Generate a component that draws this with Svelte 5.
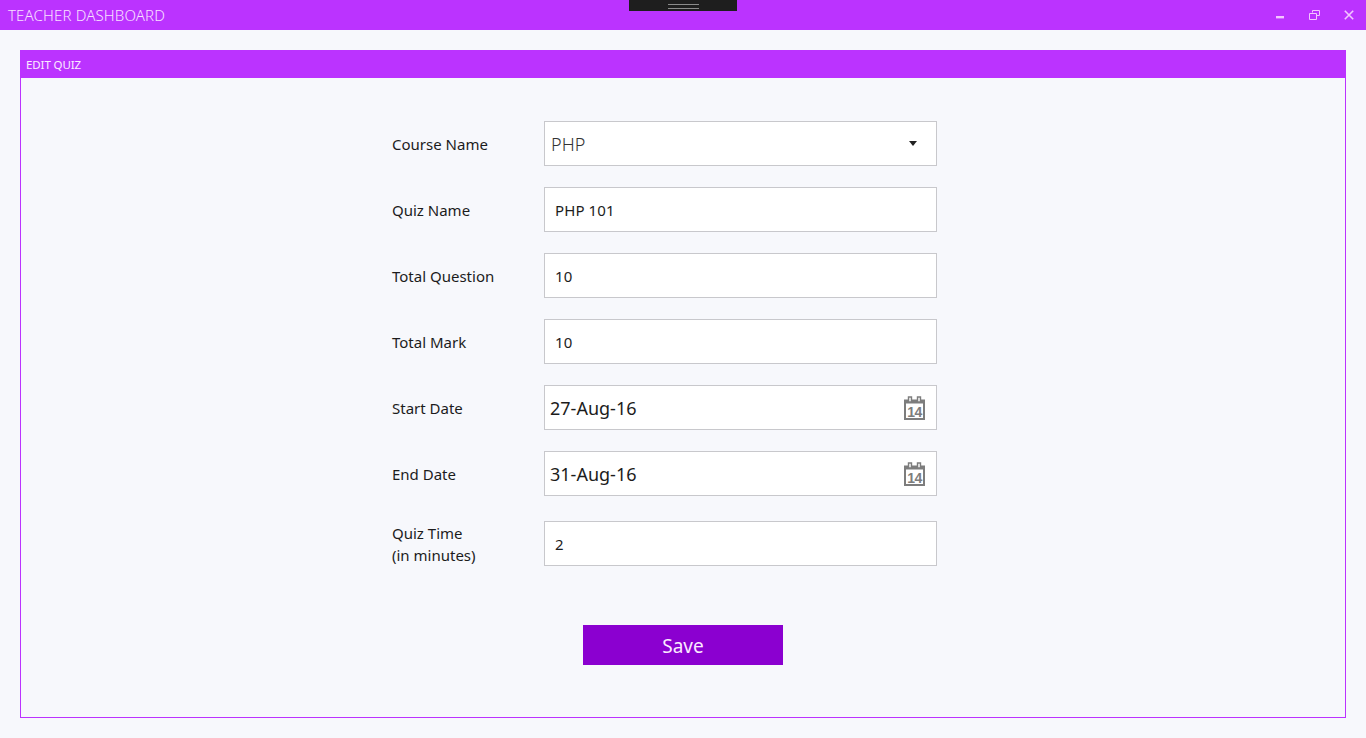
<script>
  const rows = [
    { label: 'Quiz Name', value: 'PHP 101' },
    { label: 'Total Question', value: '10' },
    { label: 'Total Mark', value: '10' }
  ];
  const dates = [
    { label: 'Start Date', value: '27-Aug-16' },
    { label: 'End Date', value: '31-Aug-16' }
  ];
</script>

<div class="window">
  <header class="titlebar">
    <span class="title">TEACHER DASHBOARD</span>
    <div class="grip"><i></i></div>
    <div class="controls">
      <svg width="10" height="10" viewBox="0 0 10 10"><rect x="1" y="6" width="8" height="2.4" fill="#f3c6ff" /></svg>
      <svg width="11" height="10" viewBox="0 0 11 10" fill="none" stroke="#f3c6ff"><path d="M3.5 2.5V.5h7v5H8M.5 3.5h7v6h-7z" /></svg>
      <svg width="10" height="10" viewBox="0 0 10 10" fill="none" stroke="#f3c6ff" stroke-width="1.6"><path d="M.8.8l8.4 8.4M9.2.8L.8 9.2" /></svg>
    </div>
  </header>

  <section class="panel">
    <h2>EDIT QUIZ</h2>
    <div class="form">
      <div class="row">
        <span class="label">Course Name</span>
        <div class="field select">
          <span>PHP</span>
          <svg width="8" height="5" viewBox="0 0 8 5"><path d="M0 0h8L4 5z" fill="#222" /></svg>
        </div>
      </div>

      {#each rows as r}
        <div class="row">
          <span class="label">{r.label}</span>
          <div class="field">{r.value}</div>
        </div>
      {/each}

      {#each dates as d}
        <div class="row">
          <span class="label">{d.label}</span>
          <div class="field date">
            <span>{d.value}</span>
            <svg width="22" height="24" viewBox="0 0 22 24">
              <path d="M1 4.500h19v18.500H1z" fill="none" stroke="#7d7d7d" stroke-width="2" />
              <path d="M1 4h19v3.500H1z" fill="#7d7d7d" />
              <path d="M4.500 1h3v5h-3zM13.500 1h3v5h-3z" fill="#f4f4f4" stroke="#7d7d7d" stroke-width="1.400" />
              <text x="10.500" y="20.500" text-anchor="middle" class="day">14</text>
            </svg>
          </div>
        </div>
      {/each}

      <div class="row last">
        <span class="label">Quiz Time<br />(in minutes)</span>
        <div class="field">2</div>
      </div>

      <button class="save">Save</button>
    </div>
  </section>
</div>

<style>
  :global(body) {
    background: #f7f8fc;
  }

  .window {
    height: 738px;
    display: flex;
    flex-direction: column;
    font-family: 'Noto Sans', 'Open Sans', sans-serif;
    color: #1c1c1c;
    overflow: hidden;
  }

  .titlebar {
    height: 30px;
    flex: none;
    background: #bb33ff;
    display: flex;
    align-items: center;
    justify-content: space-between;
    padding: 0 12px 0 8px;
    position: relative;
  }

  .title {
    font-size: 15px;
    font-weight: 300;
    letter-spacing: 0.15px;
    color: #f8e0ff;
  }

  .grip {
    position: absolute;
    left: 629px;
    top: 0;
    width: 108px;
    height: 11px;
    background: #1e1e1e;
  }

  .grip i {
    display: block;
    width: 31px;
    height: 3px;
    margin: 4px auto 0;
    border-top: 1px solid #8a8a8a;
    border-bottom: 1px solid #8a8a8a;
  }

  .controls {
    display: flex;
    align-items: center;
    gap: 24px;
  }

  .panel {
    margin: 20px;
    flex: 1;
    border: 1px solid #bb33ff;
    border-top: 0;
  }

  h2 {
    margin: 0 -1px;
    height: 28px;
    line-height: 29px;
    padding-left: 6px;
    background: #bb33ff;
    color: #fbeaff;
    font-size: 11.5px;
    font-weight: 400;
    letter-spacing: -0.1px;
  }

  .form {
    display: flex;
    flex-direction: column;
    padding: 43px 0 0 371px;
    gap: 21px;
  }

  .row {
    display: flex;
    align-items: center;
    height: 45px;
  }

  .row.last {
    margin-top: 4px;
  }

  .label {
    width: 152px;
    font-size: 15px;
    line-height: 22px;
  }

  .field {
    box-sizing: border-box;
    width: 393px;
    height: 45px;
    background: #fff;
    border: 1px solid #c8c8cc;
    display: flex;
    align-items: center;
    padding-left: 10px;
    font-size: 15px;
    letter-spacing: 0.1px;
  }

  .select {
    padding: 0 19px 0 6px;
    justify-content: space-between;
    font-size: 18px;
    font-weight: 300;
    color: #333;
  }

  .date {
    padding: 0 10px 0 5px;
    justify-content: space-between;
    font-size: 18px;
    letter-spacing: 0;
  }

  .day {
    font-size: 14px;
    font-weight: 700;
    letter-spacing: -0.5px;
    fill: #7d7d7d;
    font-family: 'Liberation Sans', sans-serif;
  }

  .save {
    align-self: flex-start;
    margin: 38px 0 0 191px;
    width: 200px;
    height: 40px;
    border: 0;
    background: #8b00d0;
    color: #fbeaff;
    font-family: inherit;
    font-size: 19px;
    padding: 2px 0 0;
  }
</style>
